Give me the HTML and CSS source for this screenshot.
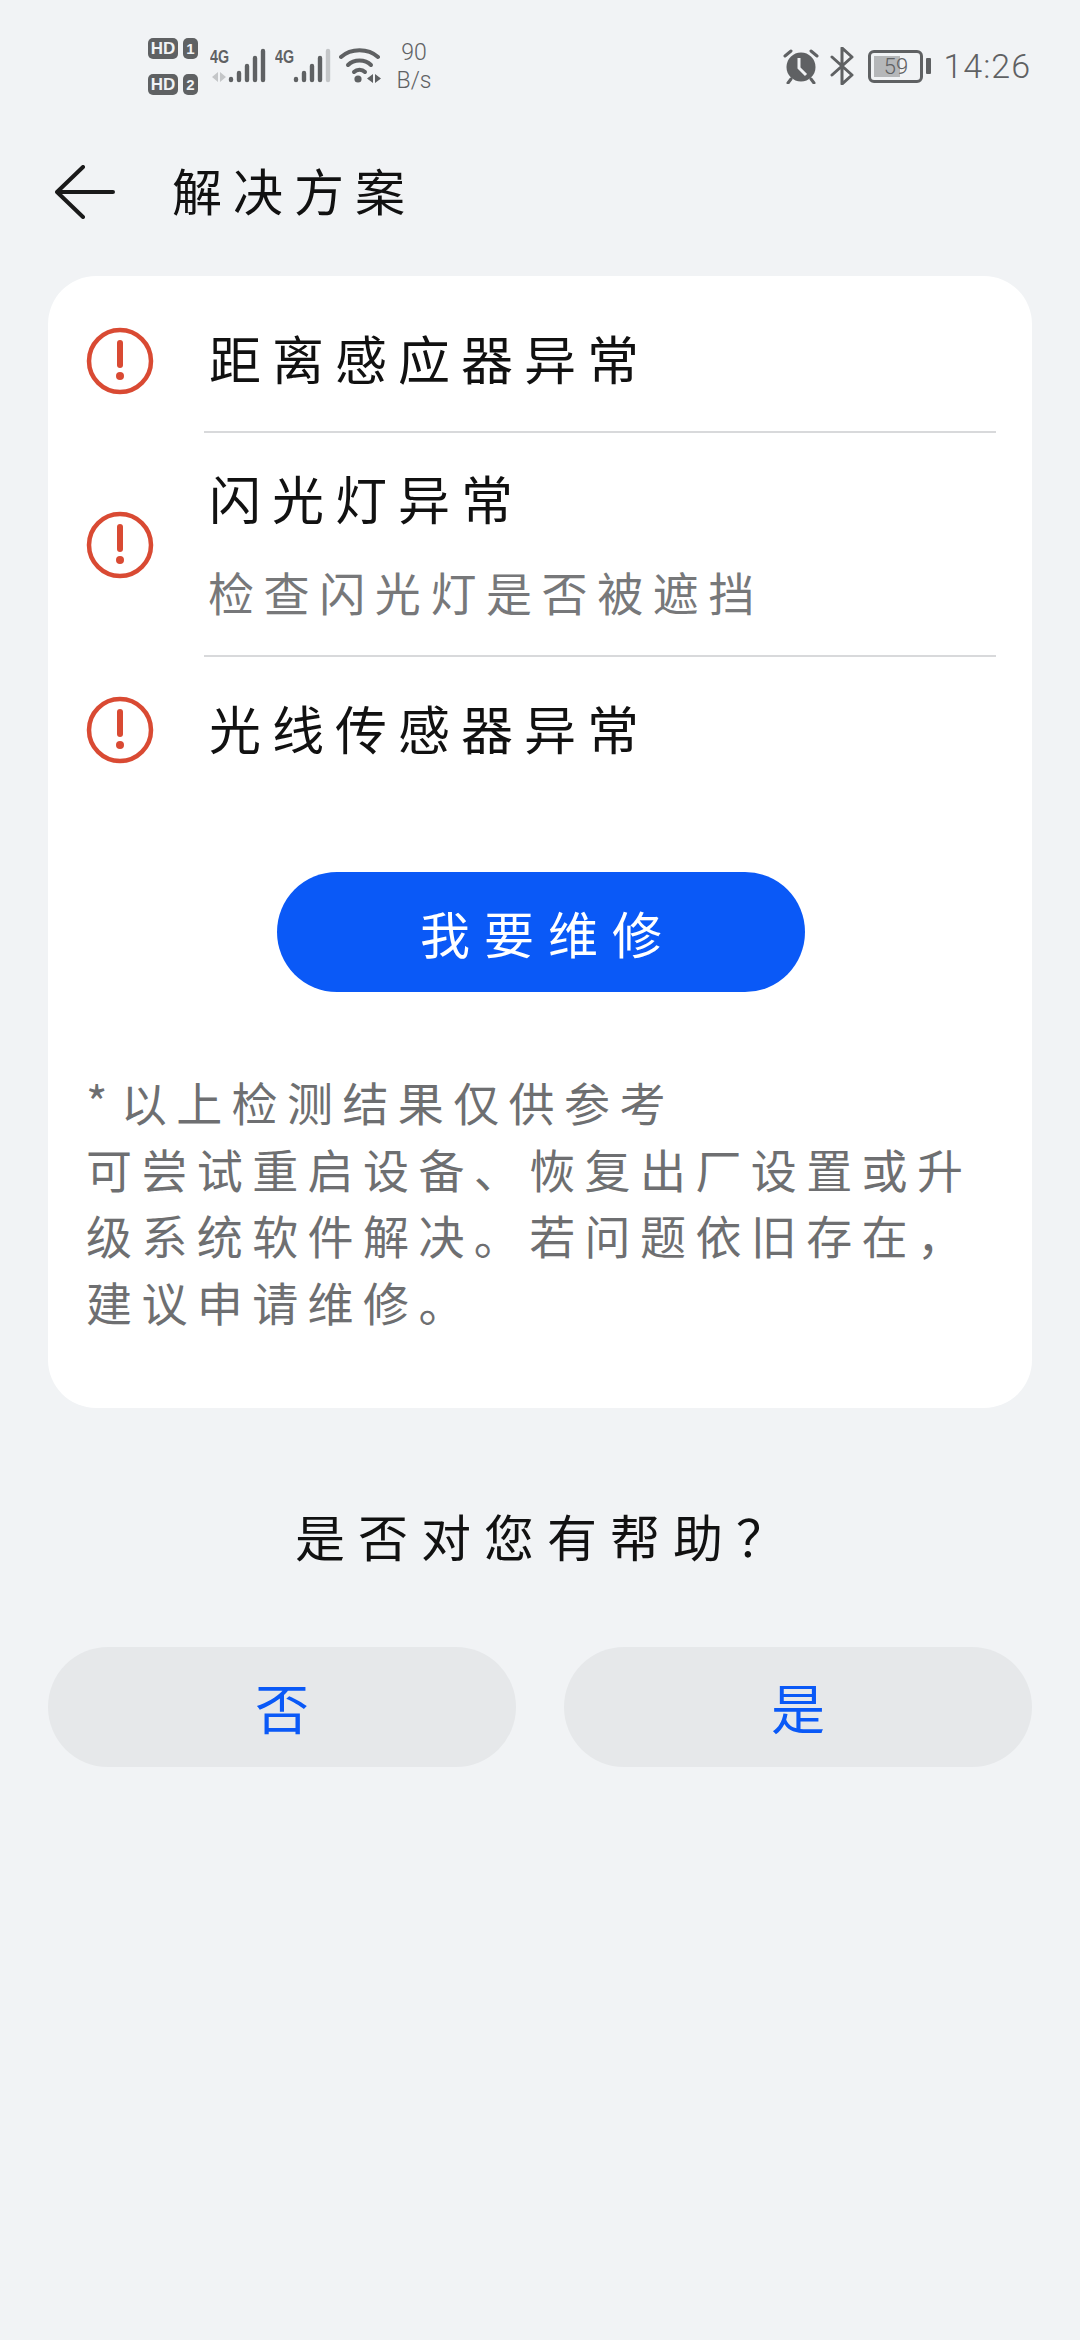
FILE: index.html
```html
<!DOCTYPE html>
<html lang="zh-CN">
<head>
    <meta charset="UTF-8">
    <meta name="viewport" content="width=device-width, initial-scale=1.0">
    <title>解决方案</title>
    <link rel="stylesheet" href="styles.css">
</head>
<body>
    <div class="status">
        <div class="status-left">
            <div class="hd-col">
                <div class="hd-row"><span class="hd">HD</span><span class="sim">1</span></div>
                <div class="hd-row"><span class="hd">HD</span><span class="sim">2</span></div>
            </div>
            <svg class="signal" width="56" height="36" viewBox="0 0 56 36">
                <text x="0" y="15" class="net" textLength="19" lengthAdjust="spacingAndGlyphs">4G</text>
                <path d="M8 24v10L2 29zM10 24v10l6-5z" fill="#c4c6c8"/>
                <g stroke="#5f6163" stroke-width="4.4" stroke-linecap="round">
                    <path d="M21 31v1M29 25v7M37 18v14M45 10v22M53 3v29"/>
                </g>
            </svg>
            <svg class="signal" width="56" height="36" viewBox="0 0 56 36">
                <text x="0" y="15" class="net" textLength="19" lengthAdjust="spacingAndGlyphs">4G</text>
                <g stroke="#5f6163" stroke-width="4.4" stroke-linecap="round">
                    <path d="M21 31v1M29 25v7M37 18v14M45 10v22"/>
                </g>
                <path d="M53 3v29" stroke="#c4c6c8" stroke-width="4.4" stroke-linecap="round"/>
            </svg>
            <svg class="wifi" width="42" height="36" viewBox="0 0 42 36">
                <g fill="none" stroke="#5f6163" stroke-width="4" stroke-linecap="round">
                    <path d="M2 9C12 0 29 0 39 9"/>
                    <path d="M9 17c6-6 17-6 23 0"/>
                    <path d="M15 24c3-3 8-3 11 0"/>
                </g>
                <circle cx="19" cy="31" r="3.6" fill="#5f6163"/>
                <path d="M34 26v9l-6-4.500zM36 26v9l6-4.500z" fill="#5f6163"/>
            </svg>
            <div class="speed">90<br>B/s</div>
        </div>
        <div class="status-right">
            <svg class="alarm" width="36" height="36" viewBox="0 0 36 36">
                <path d="M2 8l6-5M34 8l-6-5M8 31l-3 4M28 31l3 4" stroke="#5f6163" stroke-width="3" stroke-linecap="round"/>
                <circle cx="18" cy="19" r="14.5" fill="#5f6163"/>
                <path d="M16 10v10l7 7" fill="none" stroke="#f1f3f5" stroke-width="3"/>
            </svg>
            <svg class="bt" width="26" height="38" viewBox="0 0 26 38">
                <path d="M2 10l20 18-10 9V1l10 9L2 28" fill="none" stroke="#5f6163" stroke-width="3" stroke-linejoin="round" stroke-linecap="round"/>
            </svg>
            <div class="battery">
                <div class="battery-box">
                    <div class="battery-fill"></div>
                    <span class="battery-num">59</span>
                </div>
                <div class="battery-nub"></div>
            </div>
            <div class="clock">14:26</div>
        </div>
    </div>

    <div class="header">
        <svg class="back" width="60" height="54" viewBox="0 0 60 54">
            <path d="M58 27H2M28 2L2 27l26 25" fill="none" stroke="#1a1a1a" stroke-width="4" stroke-linecap="round" stroke-linejoin="round"/>
        </svg>
        <div class="title">解决方案</div>
    </div>

    <div class="card">
        <div class="row row-a">
            <svg class="warn" width="68" height="68" viewBox="0 0 68 68">
                <circle cx="34" cy="34" r="31" fill="none" stroke="#d94a33" stroke-width="4.5"/>
                <path d="M34 16v22" stroke="#d94a33" stroke-width="6" stroke-linecap="round"/>
                <circle cx="34" cy="49" r="4" fill="#d94a33"/>
            </svg>
            <div class="row-body line"><div class="row-title">距离感应器异常</div></div>
        </div>
        <div class="row row-b">
            <svg class="warn" width="68" height="68" viewBox="0 0 68 68">
                <circle cx="34" cy="34" r="31" fill="none" stroke="#d94a33" stroke-width="4.5"/>
                <path d="M34 16v22" stroke="#d94a33" stroke-width="6" stroke-linecap="round"/>
                <circle cx="34" cy="49" r="4" fill="#d94a33"/>
            </svg>
            <div class="row-body line">
                <div class="row-title">闪光灯异常</div>
                <div class="row-sub">检查闪光灯是否被遮挡</div>
            </div>
        </div>
        <div class="row row-c">
            <svg class="warn" width="68" height="68" viewBox="0 0 68 68">
                <circle cx="34" cy="34" r="31" fill="none" stroke="#d94a33" stroke-width="4.5"/>
                <path d="M34 16v22" stroke="#d94a33" stroke-width="6" stroke-linecap="round"/>
                <circle cx="34" cy="49" r="4" fill="#d94a33"/>
            </svg>
            <div class="row-body"><div class="row-title">光线传感器异常</div></div>
        </div>

        <div class="repair">我要维修</div>

        <div class="note">
            <div><span class="star">* </span>以上检测结果仅供参考</div>
            可尝试重启设备、恢复出厂设置或升级系统软件解决。若问题依旧存在，建议申请维修。
        </div>
    </div>

    <div class="question">是否对您有帮助？</div>

    <div class="choices">
        <div class="choice">否</div>
        <div class="choice">是</div>
    </div>
</body>
</html>
```

FILE: styles.css
```css
body {
    margin: 0;
    background-color: #f1f3f5;
    font-family: "Noto Sans CJK SC", "Noto Sans", sans-serif;
    color: #111;
}

/* status bar */
.status {
    height: 120px;
    box-sizing: border-box;
    padding: 36px 49px 24px 148px;
    display: flex;
    justify-content: space-between;
    color: #5f6163;
}
.status-left, .status-right {
    display: flex;
    align-items: center;
}
.hd-col {
    display: flex;
    flex-direction: column;
    gap: 15px;
    margin-top: 1px;
}
.hd-row {
    display: flex;
    gap: 5px;
}
.hd, .sim {
    height: 21px;
    background-color: #5f6163;
    color: #f1f3f5;
    font-family: "Liberation Sans", sans-serif;
    font-weight: bold;
    font-size: 17px;
    line-height: 21px;
    text-align: center;
    border-radius: 5px;
}
.hd {
    width: 30px;
}
.sim {
    width: 15px;
    font-size: 15px;
}
.signal {
    margin-left: 12px;
}
.signal + .signal {
    margin-left: 9px;
}
.net {
    font-family: "Liberation Sans", sans-serif;
    font-weight: bold;
    font-size: 18px;
    fill: #5f6163;
}
.wifi {
    margin-left: 8px;
}
.speed {
    width: 46px;
    margin: 2px 0 0 10px;
    font-family: Roboto, sans-serif;
    font-weight: 300;
    font-size: 23px;
    line-height: 28px;
    text-align: center;
}
.alarm {
    margin-right: 11px;
}
.bt {
    margin-right: 12px;
}
.battery {
    display: flex;
    align-items: center;
    gap: 3px;
    margin-right: 12px;
}
.battery-box {
    position: relative;
    width: 55px;
    height: 33px;
    box-sizing: border-box;
    border: 3px solid #5f6163;
    border-radius: 6px;
    text-align: center;
}
.battery-fill {
    position: absolute;
    left: 3px;
    top: 3px;
    bottom: 3px;
    width: 26px;
    background-color: #b5b7b9;
}
.battery-num {
    position: relative;
    font-family: Roboto, sans-serif;
    font-weight: 300;
    font-size: 22px;
    line-height: 27px;
    display: block;
}
.battery-nub {
    width: 5px;
    height: 16px;
    background-color: #5f6163;
    border-radius: 1px;
}
.clock {
    font-family: Roboto, sans-serif;
    font-weight: 300;
    font-size: 34px;
    letter-spacing: 1px;
}

/* header */
.header {
    height: 144px;
    padding-left: 55px;
    display: flex;
    align-items: center;
}
.back {
    flex-shrink: 0;
}
.title {
    margin: -7px 0 0 57px;
    font-size: 50px;
    letter-spacing: 11px;
}

/* card */
.card {
    margin: 12px 48px 0;
    height: 1132px;
    box-sizing: border-box;
    padding: 12px 36px 0 38px;
    background-color: #fff;
    border-radius: 48px;
}
.row {
    display: flex;
}
.row-a {
    height: 145px;
}
.row-b {
    height: 224px;
}
.row-c {
    height: 146px;
}
.warn {
    align-self: center;
    flex-shrink: 0;
    margin-right: 50px;
}
.row-body {
    flex: 1;
    box-sizing: border-box;
    padding: 0 0 4px 5px;
    display: flex;
    flex-direction: column;
    justify-content: center;
}
.line {
    border-bottom: 2px solid #d8d9db;
}
.row-title {
    font-size: 52px;
    line-height: 70px;
    letter-spacing: 11px;
}
.row-sub {
    margin: 28px 0 0 -1px;
    font-size: 46px;
    line-height: 60px;
    letter-spacing: 9.6px;
    color: #77787a;
}
.repair {
    width: 528px;
    height: 120px;
    margin: 69px auto 0;
    background-color: #0a59f7;
    color: #fff;
    border-radius: 60px;
    font-size: 50px;
    line-height: 120px;
    letter-spacing: 14px;
    text-indent: 14px;
    text-align: center;
}
.note {
    margin-top: 76px;
    font-size: 46px;
    line-height: 66.5px;
    letter-spacing: 9.4px;
    color: #6e6f71;
}
.star {
    letter-spacing: 1.5px;
}

/* helpful question */
.question {
    margin-top: 92px;
    font-size: 50px;
    line-height: 70px;
    letter-spacing: 13px;
    text-indent: 14px;
    text-align: center;
}
.choices {
    margin: 77px 48px 0;
    display: flex;
    gap: 48px;
}
.choice {
    flex: 1;
    height: 120px;
    background-color: #e6e8ea;
    color: #0a59f7;
    border-radius: 60px;
    font-size: 54px;
    line-height: 120px;
    text-align: center;
}
```
